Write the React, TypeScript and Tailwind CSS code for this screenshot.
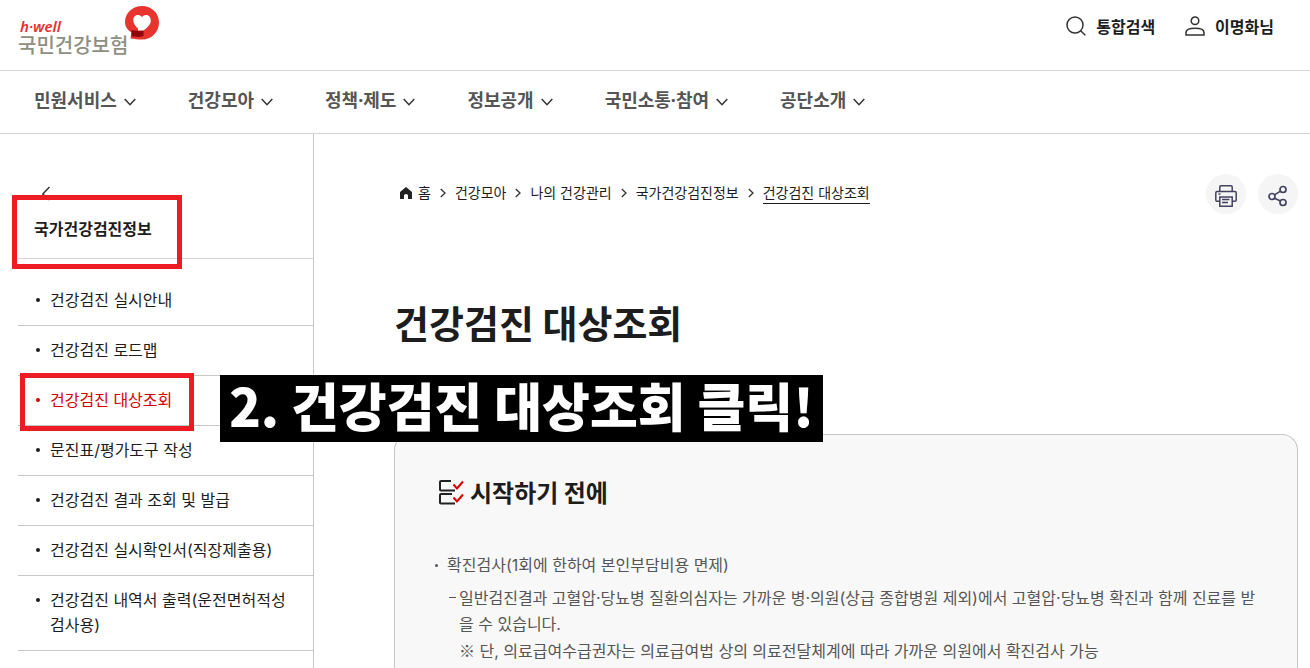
import React from 'react';

const NAV_ITEMS = ['민원서비스', '건강모아', '정책·제도', '정보공개', '국민소통·참여', '공단소개'];

const CRUMBS = ['건강모아', '나의 건강관리', '국가건강검진정보'];

const SIDE_ITEMS = [
  { label: '건강검진 실시안내' },
  { label: '건강검진 로드맵' },
  { label: '건강검진 대상조회', active: true },
  { label: '문진표/평가도구 작성' },
  { label: '건강검진 결과 조회 및 발급' },
  { label: '건강검진 실시확인서(직장제출용)' },
  { label: '건강검진 내역서 출력(운전면허적성검사용)' },
];

const Logo = () => (
  <a href="#" aria-label="국민건강보험" className="flex items-start">
    <span className="flex flex-col pt-3">
      <span className="pl-[2px] font-['Noto_Sans'] text-[15px] leading-[17px] font-semibold italic text-[#e5322d]">h·well</span>
      <span className="text-[20px] leading-5 font-medium text-[#8f8e82]">국민건강보험</span>
    </span>
    <svg viewBox="0 0 34 34" className="-ml-[3px] h-[34px] w-[34px]" aria-hidden="true">
      <path d="M17 0C26.600 0 34 7 34 16.500C34 26 26.500 33.500 17 33.500C13.500 33.500 9 33 5.500 32.500L6.500 26.500C2.500 24 0 20.500 0 16C0 7 7.500 0 17 0Z" fill="#e8342f" />
      <path d="M6.500 24C10 25 14 25 18.500 24V30C14.500 31.500 9.500 31 6.500 30Z" fill="#8e0408" />
      <path d="M17 11C14.500 7.500 8.300 8.500 8.300 14C8.300 18 11 20.500 13 22.500V24.500H18.500C22 22 25.800 18.500 25.800 14.500C25.800 8.500 19.500 7.500 17 11Z" fill="#fff" />
    </svg>
  </a>
);

const ChevronDown = () => (
  <svg viewBox="0 0 12 8" className="mt-1 h-2 w-3" fill="none" stroke="#333" strokeWidth="1.500" aria-hidden="true">
    <path d="M.7 1L6 6.700L11.300 1" />
  </svg>
);

const ChevronRight = () => (
  <svg viewBox="0 0 6 10" className="h-[10px] w-[6px]" fill="none" stroke="#333" strokeWidth="1.300" aria-hidden="true">
    <path d="M.8 1L5 5L.8 9" />
  </svg>
);

const SearchIcon = () => (
  <svg viewBox="0 0 20 20" className="h-5 w-5" fill="none" stroke="#333" strokeWidth="1.500" aria-hidden="true">
    <circle cx="9" cy="9" r="8" />
    <path d="M14.700 14.700L19.300 19.300" />
  </svg>
);

const UserIcon = () => (
  <svg viewBox="0 0 20 20" className="h-5 w-5" fill="none" stroke="#333" strokeWidth="1.500" aria-hidden="true">
    <circle cx="10" cy="4.800" r="3.800" />
    <path d="M1 19V16.500C1 14 4 12.300 10 12.300S19 14 19 16.500V19Z" />
  </svg>
);

const PrintIcon = () => (
  <svg viewBox="0 0 22 22" className="h-[22px] w-[22px]" fill="none" stroke="#434260" strokeWidth="1.500" aria-hidden="true">
    <path d="M4.800 6.500V2Q4.800.8 6 .8H16Q17.200.8 17.200 2V6.500" />
    <path d="M4.800 16.300H2Q.8 16.300.8 15V8Q.8 6.500 2 6.500H20Q21.200 6.500 21.200 8V15Q21.200 16.300 20 16.300H17.200" />
    <path d="M4.800 12H17.200V21.200H4.800Z" />
    <path d="M3.500 9H5.500M7 14.500H14.500M7 17.500H13" />
  </svg>
);

const ShareIcon = () => (
  <svg viewBox="0 0 20 22" className="h-[22px] w-5" fill="none" stroke="#434260" strokeWidth="1.700" aria-hidden="true">
    <circle cx="4" cy="11.500" r="3" />
    <circle cx="15" cy="4.500" r="3" />
    <circle cx="15" cy="17.500" r="3" />
    <path d="M6.500 9.900L12.500 6.100M6.500 13.200L12.500 16" />
  </svg>
);

const ChecklistIcon = () => (
  <svg viewBox="0 0 26 26" className="h-[26px] w-[26px]" fill="none" strokeWidth="2" aria-hidden="true">
    <path d="M13 2H3Q2 2 2 3V10.500Q2 11.500 3 11.500H17" stroke="#222" />
    <path d="M14 15H3Q2 15 2 16V23.500Q2 24.500 3 24.500H17" stroke="#222" />
    <path d="M15.500 5.500L19 9.500L25 2.500M15.500 18.500L19 22.500L25 15.500" stroke="#d50000" />
  </svg>
);

export default function App() {
  return (
    <div className="relative flex min-h-screen flex-col bg-white font-['Noto_Sans_CJK_KR',sans-serif] text-[#1d1d1d]">
      <header>
        <div className="flex h-[71px] items-start justify-between border-b border-[#d4d4d4] pt-[6px] pr-9 pl-[18px]">
          <Logo />
          <div className="flex items-center gap-[30px] pt-2 font-bold">
            <button type="button" className="flex items-center gap-[10px]">
              <SearchIcon />
              통합검색
            </button>
            <button type="button" className="flex items-center gap-[10px]">
              <UserIcon />
              이명화님
            </button>
          </div>
        </div>
        <nav className="flex h-[63px] items-center gap-[52px] border-b border-[#d4d4d4] pb-1 pl-[34px] font-['Noto_Sans','Noto_Sans_CJK_KR',sans-serif]">
          {NAV_ITEMS.map((item) => (
            <button key={item} type="button" className="flex items-center gap-[7px] text-[18px] font-bold text-[#555]">
              {item}
              <ChevronDown />
            </button>
          ))}
        </nav>
      </header>

      <div className="flex flex-1">
        <aside className="w-[314px] shrink-0 border-r border-[#c6c6c6] pl-[18px]">
          <div className="flex h-[125px] flex-col border-b border-[#d4d4d4] pt-[52px] pl-4">
            <button type="button" aria-label="이전" className="ml-2 h-4 w-2">
              <svg viewBox="0 0 8 16" className="h-4 w-2" fill="none" stroke="#333" strokeWidth="1.500">
                <path d="M7.500 1L.8 8L7.500 14" />
              </svg>
            </button>
            <h2 className="pt-[13px] leading-[26px] font-bold">국가건강검진정보</h2>
          </div>
          <ul className="pt-[17px] font-['Inter','Noto_Sans_CJK_KR',sans-serif]">
            {SIDE_ITEMS.map((item) => (
              <li key={item.label} className="border-b border-[#c6c6c6]">
                <a
                  href="#"
                  className={`flex gap-[10px] py-3 pr-6 pl-[18px] leading-[25px] break-all ${item.active ? 'text-[#d50000]' : ''}`}
                >
                  <span className="mt-[10px] h-1 w-1 shrink-0 rounded-full bg-current" />
                  <span>{item.label}</span>
                </a>
              </li>
            ))}
          </ul>
        </aside>

        <main className="flex flex-1 flex-col pt-10 pr-3 pl-20">
          <div className="flex h-10 items-center justify-between">
            <nav className="flex items-center gap-[9px] pb-[2px] pl-[6px] font-['Inter','Noto_Sans_CJK_KR',sans-serif] text-[14px] leading-5">
              <a href="#" className="flex items-center gap-[6px]">
                <svg viewBox="0 0 12 12" className="h-3 w-3" fill="#222" aria-hidden="true">
                  <path d="M6 0L12 5V12H8V8.500Q8 7 6 7T4 8.500V12H0V5Z" />
                </svg>
                홈
              </a>
              {CRUMBS.map((crumb) => (
                <React.Fragment key={crumb}>
                  <ChevronRight />
                  <a href="#">{crumb}</a>
                </React.Fragment>
              ))}
              <ChevronRight />
              <a href="#" aria-current="page" className="border-b border-[#1d1d1d]">건강검진 대상조회</a>
            </nav>
            <div className="flex gap-3">
              <button type="button" aria-label="인쇄" className="flex h-10 w-10 items-center justify-center rounded-full bg-[#f5f5f5] pt-1">
                <PrintIcon />
              </button>
              <button type="button" aria-label="공유" className="flex h-10 w-10 items-center justify-center rounded-full bg-[#f5f5f5] pt-1">
                <ShareIcon />
              </button>
            </div>
          </div>

          <h1 className="pt-20 text-[38px] leading-[56px] font-bold">건강검진 대상조회</h1>

          <section className="mt-[84px] flex-1 rounded-t-2xl border border-b-0 border-[#c6c6c6] bg-[#f8f8f8] px-10 pt-[39px]">
            <h2 className="flex items-center gap-[6px] pl-[3px] text-[24px] leading-9 font-bold">
              <ChecklistIcon />
              시작하기 전에
            </h2>
            <div className="pt-[42px] font-['Inter','Noto_Sans_CJK_KR',sans-serif] text-[#555]">
              <p className="flex gap-[9px] leading-[26px]">
                <span className="mt-3 h-[3px] w-[3px] shrink-0 rounded-full bg-current" />
                확진검사(1회에 한하여 본인부담비용 면제)
              </p>
              <div className="mt-[7px] flex gap-[3px] pl-[14px] leading-[26px]">
                <span className="mt-3 h-px w-[7px] shrink-0 bg-current" />
                <div className="break-all">
                  <p>일반검진결과 고혈압·당뇨병 질환의심자는 가까운 병·의원(상급 종합병원 제외)에서 고혈압·당뇨병 확진과 함께 진료를 받을 수 있습니다.</p>
                  <p>
                    <span className="font-['Noto_Sans_CJK_KR',sans-serif]">※</span> 단, 의료급여수급권자는 의료급여법 상의 의료전달체계에 따라 가까운 의원에서 확진검사 가능
                  </p>
                </div>
              </div>
            </div>
          </section>
        </main>
      </div>

      {/* guide marks laid over the page */}
      <div className="pointer-events-none absolute top-[195px] left-3 h-[74px] w-[170px] border-5 border-[#ed1c24]" />
      <div className="pointer-events-none absolute top-[373px] left-5 h-[58px] w-[174px] border-5 border-[#ed1c24]" />
      <p className="pointer-events-none absolute top-[375px] left-[220px] flex h-[67px] w-[603px] items-center justify-center bg-black pb-2 text-[52px] leading-none font-black whitespace-nowrap text-white">
        2. 건강검진 대상조회 클릭!
      </p>
    </div>
  );
}
